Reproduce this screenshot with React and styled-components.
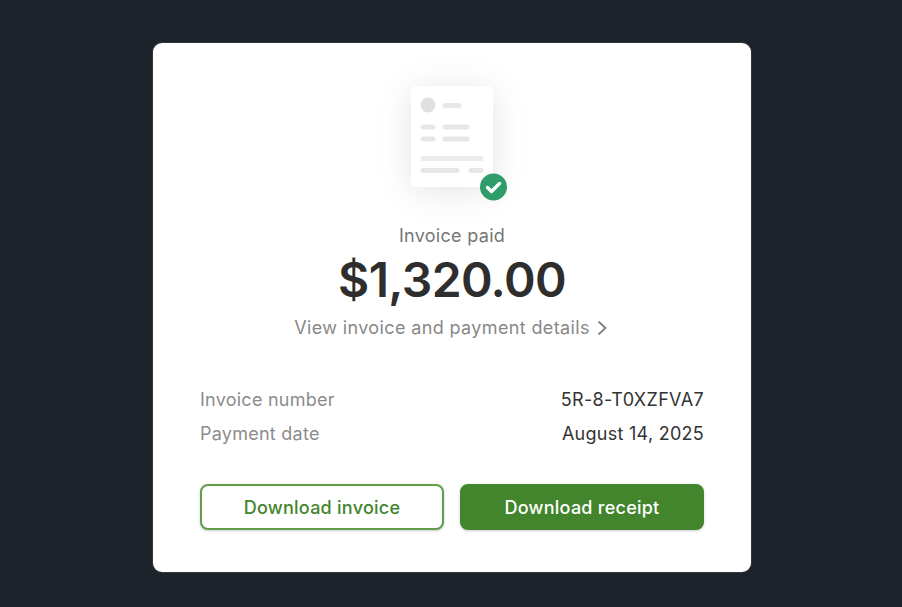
import React from 'react';
import styled, { createGlobalStyle } from 'styled-components';

const GlobalStyle = createGlobalStyle`
  html, body {
    margin: 0;
    height: 100%;
    background: #1c232b;
    font-family: 'Inter', 'Liberation Sans', sans-serif;
  }
  * { box-sizing: border-box; }
`;

const Page = styled.div`
  width: 902px;
  height: 607px;
  display: flex;
  justify-content: center;
  padding-top: 43px;
  background: #1c232b;
`;

const Card = styled.div`
  width: 598px;
  height: 529px;
  margin-left: 2px;
  background: #fff;
  border-radius: 9px;
  padding: 17px 47px 0;
  display: flex;
  flex-direction: column;
  align-items: stretch;
  box-shadow: 0 0 0 1px rgba(90, 96, 102, 0.35);
`;

const Illustration = styled.svg`
  display: block;
  width: 180px;
  height: 160px;
  align-self: center;
`;

const Status = styled.div`
  margin-top: 5px;
  text-align: center;
  font-size: 18px;
  line-height: 22px;
  letter-spacing: 0.3px;
  color: #767676;
`;

const Amount = styled.div`
  margin-top: 4px;
  text-align: center;
  font-size: 48px;
  line-height: 58px;
  font-weight: 600;
  color: #2e2e2e;
  letter-spacing: -0.65px;
`;

const DetailsLink = styled.a`
  margin-top: 7px;
  padding-right: 2px;
  display: flex;
  justify-content: center;
  align-items: center;
  gap: 7px;
  font-size: 18px;
  line-height: 24px;
  letter-spacing: 0.37px;
  color: #888;
`;

const Rows = styled.div`
  margin-top: 48px;
  display: flex;
  flex-direction: column;
  gap: 10px;
`;

const Row = styled.div`
  display: flex;
  justify-content: space-between;
  font-size: 18px;
  line-height: 24px;
`;

const Label = styled.span`
  color: #8c8c8c;
  letter-spacing: 0.25px;
`;

const Value = styled.span`
  color: #333;
  letter-spacing: ${props => props.$spacing};
`;

const Actions = styled.div`
  margin-top: 38px;
  display: grid;
  grid-template-columns: 1fr 1fr;
  gap: 16px;
`;

const Button = styled.button`
  height: 46px;
  border-radius: 8px;
  border: 2px solid ${props => (props.$primary ? '#42852c' : '#629d4d')};
  background: ${props => (props.$primary ? '#42852c' : '#fff')};
  color: ${props => (props.$primary ? '#fff' : '#42852c')};
  font-family: inherit;
  font-size: 18px;
  font-weight: 500;
  letter-spacing: 0.25px;
  box-shadow: 0 1px 3px rgba(0, 0, 0, 0.2);
`;

function InvoiceArt() {
  return (
    <Illustration viewBox="0 0 180 160">
      <defs>
        <filter id="glow" x="-80%" y="-80%" width="260%" height="260%">
          <feDropShadow dx="0" dy="4" stdDeviation="16" floodColor="#000" floodOpacity="0.11" />
        </filter>
      </defs>
      <rect x="49" y="26" width="82" height="101" rx="5" fill="#fff" filter="url(#glow)" />
      <circle cx="66" cy="45" r="7.5" fill="#e0e0e0" />
      <rect x="80.5" y="43" width="19" height="5" rx="2.5" fill="#e7e7e7" />
      <rect x="58.5" y="64.5" width="15" height="5" rx="2.5" fill="#e7e7e7" />
      <rect x="80.5" y="64.5" width="27" height="5" rx="2.5" fill="#e7e7e7" />
      <rect x="58.5" y="76.5" width="15" height="5" rx="2.5" fill="#e7e7e7" />
      <rect x="80.5" y="76.5" width="27" height="5" rx="2.5" fill="#e7e7e7" />
      <rect x="58.5" y="96" width="63" height="5" rx="2.5" fill="#ececec" />
      <rect x="58.5" y="108" width="39" height="5" rx="2.5" fill="#e7e7e7" />
      <rect x="106.5" y="108" width="15" height="5" rx="2.5" fill="#e7e7e7" />
      <circle cx="131.5" cy="127" r="13.5" fill="#2f9c6a" />
      <path d="M125.5 127.5l4 4 8-8" fill="none" stroke="#fff" strokeWidth="3.4" strokeLinecap="round" strokeLinejoin="round" />
    </Illustration>
  );
}

export default function App() {
  return (
    <Page>
      <GlobalStyle />
      <Card>
        <InvoiceArt />
        <Status>Invoice paid</Status>
        <Amount>$1,320.00</Amount>
        <DetailsLink>
          View invoice and payment details
          <svg width="11" height="16" viewBox="0 0 11 16">
            <path d="M2 2l6.5 6L2 14" fill="none" stroke="#808080" strokeWidth="1.8" strokeLinecap="round" strokeLinejoin="round" />
          </svg>
        </DetailsLink>
        <Rows>
          <Row><Label>Invoice number</Label><Value $spacing="0.36px">5R-8-T0XZFVA7</Value></Row>
          <Row><Label>Payment date</Label><Value $spacing="0.27px">August 14, 2025</Value></Row>
        </Rows>
        <Actions>
          <Button>Download invoice</Button>
          <Button $primary>Download receipt</Button>
        </Actions>
      </Card>
    </Page>
  );
}
